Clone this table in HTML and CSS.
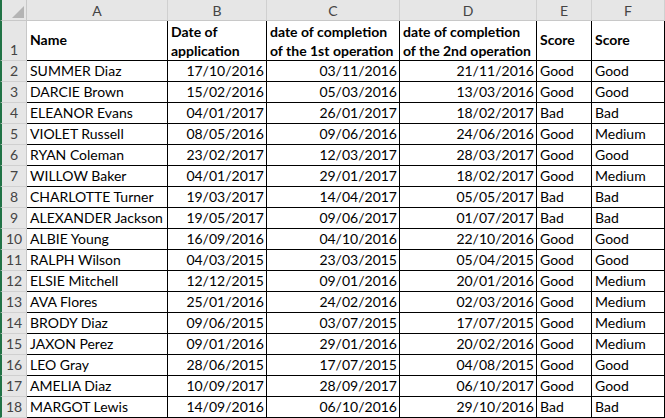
FILE: index.html
```html
<!DOCTYPE html>
<html>
<head>
<meta charset="utf-8">
<link rel="stylesheet" href="styles.css">
</head>
<body>
<div class="sheet">
  <div class="corner"><span class="tri"></span></div>
  <div class="ch">A</div><div class="ch">B</div><div class="ch">C</div><div class="ch">D</div><div class="ch">E</div><div class="ch">F</div>

  <div class="rh rh1">1</div>
  <div class="c hd mid">Name</div>
  <div class="c hd wrap">Date of<br>application</div>
  <div class="c hd wrap">date of completion<br>of the 1st operation</div>
  <div class="c hd wrap">date of completion<br>of the 2nd operation</div>
  <div class="c hd mid">Score</div>
  <div class="c hd mid">Score</div>

  <div class="rh">2</div><div class="c">SUMMER Diaz</div><div class="c r">17/10/2016</div><div class="c r">03/11/2016</div><div class="c r">21/11/2016</div><div class="c">Good</div><div class="c">Good</div>
  <div class="rh">3</div><div class="c">DARCIE Brown</div><div class="c r">15/02/2016</div><div class="c r">05/03/2016</div><div class="c r">13/03/2016</div><div class="c">Good</div><div class="c">Good</div>
  <div class="rh">4</div><div class="c">ELEANOR Evans</div><div class="c r">04/01/2017</div><div class="c r">26/01/2017</div><div class="c r">18/02/2017</div><div class="c">Bad</div><div class="c">Bad</div>
  <div class="rh">5</div><div class="c">VIOLET Russell</div><div class="c r">08/05/2016</div><div class="c r">09/06/2016</div><div class="c r">24/06/2016</div><div class="c">Good</div><div class="c">Medium</div>
  <div class="rh">6</div><div class="c">RYAN Coleman</div><div class="c r">23/02/2017</div><div class="c r">12/03/2017</div><div class="c r">28/03/2017</div><div class="c">Good</div><div class="c">Good</div>
  <div class="rh">7</div><div class="c">WILLOW Baker</div><div class="c r">04/01/2017</div><div class="c r">29/01/2017</div><div class="c r">18/02/2017</div><div class="c">Good</div><div class="c">Medium</div>
  <div class="rh">8</div><div class="c">CHARLOTTE Turner</div><div class="c r">19/03/2017</div><div class="c r">14/04/2017</div><div class="c r">05/05/2017</div><div class="c">Bad</div><div class="c">Bad</div>
  <div class="rh">9</div><div class="c">ALEXANDER Jackson</div><div class="c r">19/05/2017</div><div class="c r">09/06/2017</div><div class="c r">01/07/2017</div><div class="c">Bad</div><div class="c">Bad</div>
  <div class="rh">10</div><div class="c">ALBIE Young</div><div class="c r">16/09/2016</div><div class="c r">04/10/2016</div><div class="c r">22/10/2016</div><div class="c">Good</div><div class="c">Good</div>
  <div class="rh">11</div><div class="c">RALPH Wilson</div><div class="c r">04/03/2015</div><div class="c r">23/03/2015</div><div class="c r">05/04/2015</div><div class="c">Good</div><div class="c">Good</div>
  <div class="rh">12</div><div class="c">ELSIE Mitchell</div><div class="c r">12/12/2015</div><div class="c r">09/01/2016</div><div class="c r">20/01/2016</div><div class="c">Good</div><div class="c">Medium</div>
  <div class="rh">13</div><div class="c">AVA Flores</div><div class="c r">25/01/2016</div><div class="c r">24/02/2016</div><div class="c r">02/03/2016</div><div class="c">Good</div><div class="c">Medium</div>
  <div class="rh">14</div><div class="c">BRODY Diaz</div><div class="c r">09/06/2015</div><div class="c r">03/07/2015</div><div class="c r">17/07/2015</div><div class="c">Good</div><div class="c">Medium</div>
  <div class="rh">15</div><div class="c">JAXON Perez</div><div class="c r">09/01/2016</div><div class="c r">29/01/2016</div><div class="c r">20/02/2016</div><div class="c">Good</div><div class="c">Medium</div>
  <div class="rh">16</div><div class="c">LEO Gray</div><div class="c r">28/06/2015</div><div class="c r">17/07/2015</div><div class="c r">04/08/2015</div><div class="c">Good</div><div class="c">Good</div>
  <div class="rh">17</div><div class="c">AMELIA Diaz</div><div class="c r">10/09/2017</div><div class="c r">28/09/2017</div><div class="c r">06/10/2017</div><div class="c">Good</div><div class="c">Good</div>
  <div class="rh">18</div><div class="c">MARGOT Lewis</div><div class="c r">14/09/2016</div><div class="c r">06/10/2016</div><div class="c r">29/10/2016</div><div class="c">Bad</div><div class="c">Bad</div>
</div>
</body>
</html>
```

FILE: styles.css
```css
* { box-sizing: border-box; }
html, body { margin: 0; padding: 0; background: #ffffff; }
body {
  font-family: Lato, "Liberation Sans", sans-serif;
  font-size: 14px;
  color: #000;
  width: 665px;
  height: 418px;
  overflow: hidden;
}
.sheet {
  display: grid;
  grid-template-columns: 27px 141px 99px 133px 137px 55px 73px;
  grid-template-rows: 21px 40px repeat(17, 21px);
}
.corner {
  background: #e6e6e6;
  border-left: 2px solid #217346;
  border-right: 1px solid #c8c8c8;
  border-bottom: 1px solid #c8c8c8;
  display: flex;
  align-items: flex-end;
  justify-content: flex-end;
  padding: 0 2px 2px 0;
}
.tri {
  width: 0;
  height: 0;
  border-style: solid;
  border-width: 0 0 12px 12px;
  border-color: transparent transparent #b4b4b4 transparent;
}
.ch {
  background: #e6e6e6;
  color: #444;
  border-right: 1px solid #d0d0d0;
  border-bottom: 1px solid #c8c8c8;
  display: flex;
  align-items: center;
  justify-content: center;
  font-size: 14px;
}
.rh {
  background: #e6e6e6;
  color: #444;
  border-left: 2px solid #217346;
  border-right: 1px solid #c8c8c8;
  border-bottom: 1px solid #d0d0d0;
  display: flex;
  align-items: flex-end;
  justify-content: center;
  padding-bottom: 1px;
  line-height: 18px;
}
.c {
  border-right: 1px solid #000;
  border-bottom: 1px solid #000;
  display: flex;
  align-items: flex-end;
  padding: 0 2px 1px 3px;
  line-height: 18px;
  white-space: nowrap;
  overflow: hidden;
}
.r { justify-content: flex-end; }
.hd { font-weight: bold; }
.mid { align-items: center; }
.wrap { line-height: 19px; padding-bottom: 0; display: block; padding-top: 1px; }
```
